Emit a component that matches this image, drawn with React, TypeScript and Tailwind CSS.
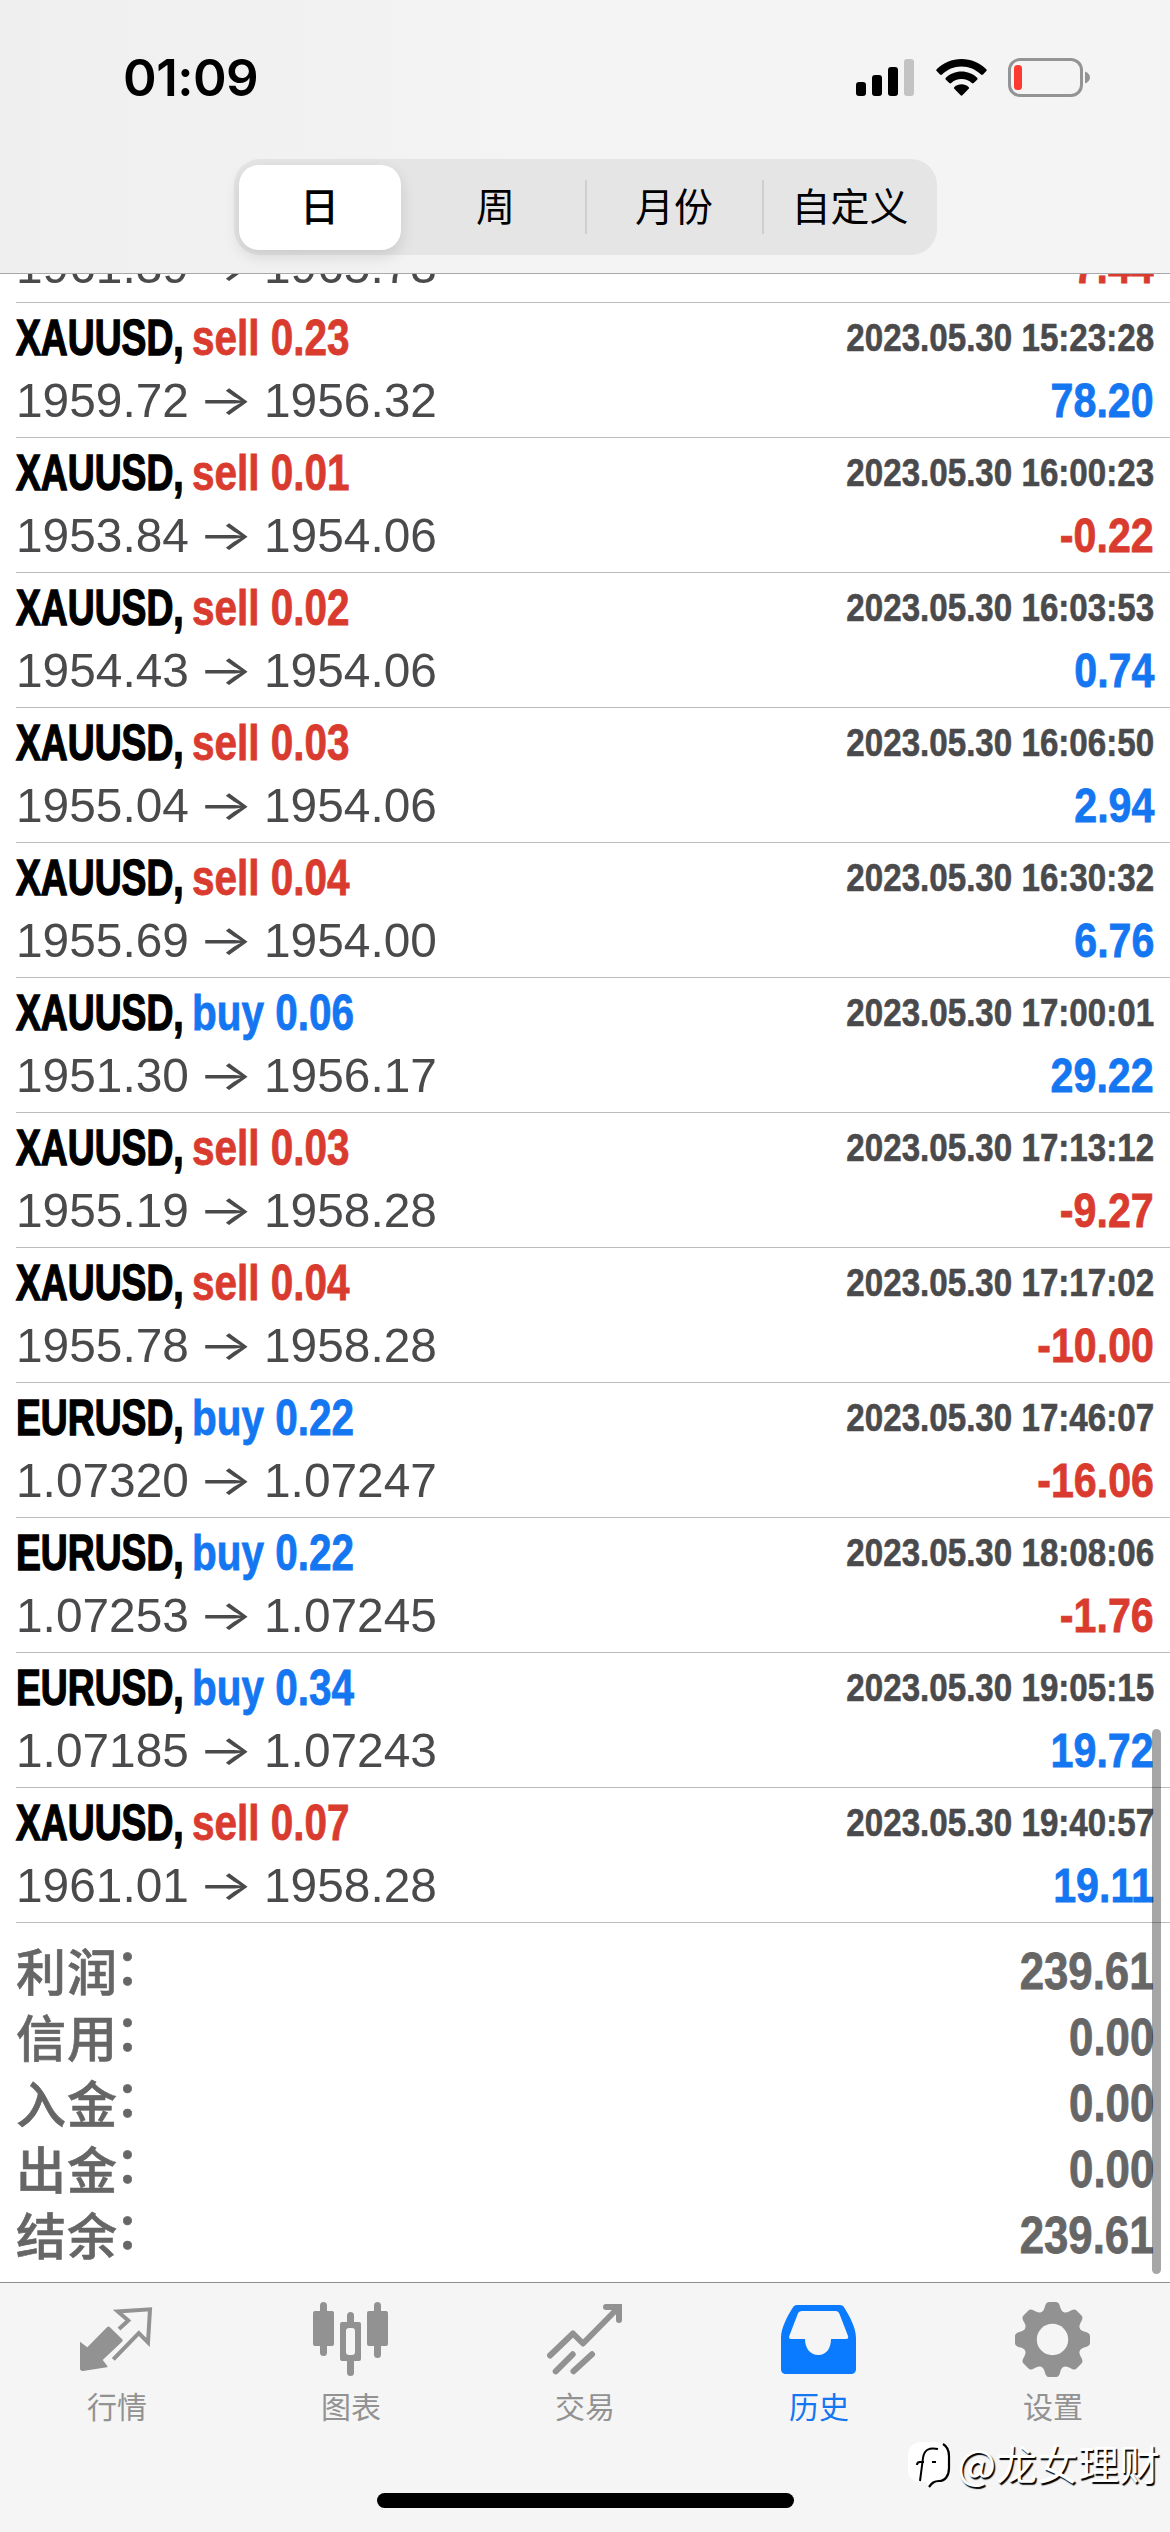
import React from 'react';

interface Deal {
    symbol: string;
    side: 'buy' | 'sell';
    volume: string;
    open: string;
    close: string;
    time: string;
    profit: string;
}

const deals: Deal[] = [
    { symbol: 'XAUUSD', side: 'sell', volume: '0.23', open: '1959.72', close: '1956.32', time: '2023.05.30 15:23:28', profit: '78.20' },
    { symbol: 'XAUUSD', side: 'sell', volume: '0.01', open: '1953.84', close: '1954.06', time: '2023.05.30 16:00:23', profit: '-0.22' },
    { symbol: 'XAUUSD', side: 'sell', volume: '0.02', open: '1954.43', close: '1954.06', time: '2023.05.30 16:03:53', profit: '0.74' },
    { symbol: 'XAUUSD', side: 'sell', volume: '0.03', open: '1955.04', close: '1954.06', time: '2023.05.30 16:06:50', profit: '2.94' },
    { symbol: 'XAUUSD', side: 'sell', volume: '0.04', open: '1955.69', close: '1954.00', time: '2023.05.30 16:30:32', profit: '6.76' },
    { symbol: 'XAUUSD', side: 'buy', volume: '0.06', open: '1951.30', close: '1956.17', time: '2023.05.30 17:00:01', profit: '29.22' },
    { symbol: 'XAUUSD', side: 'sell', volume: '0.03', open: '1955.19', close: '1958.28', time: '2023.05.30 17:13:12', profit: '-9.27' },
    { symbol: 'XAUUSD', side: 'sell', volume: '0.04', open: '1955.78', close: '1958.28', time: '2023.05.30 17:17:02', profit: '-10.00' },
    { symbol: 'EURUSD', side: 'buy', volume: '0.22', open: '1.07320', close: '1.07247', time: '2023.05.30 17:46:07', profit: '-16.06' },
    { symbol: 'EURUSD', side: 'buy', volume: '0.22', open: '1.07253', close: '1.07245', time: '2023.05.30 18:08:06', profit: '-1.76' },
    { symbol: 'EURUSD', side: 'buy', volume: '0.34', open: '1.07185', close: '1.07243', time: '2023.05.30 19:05:15', profit: '19.72' },
    { symbol: 'XAUUSD', side: 'sell', volume: '0.07', open: '1961.01', close: '1958.28', time: '2023.05.30 19:40:57', profit: '19.11' },
];

const totals = [
    { label: '利润', value: '239.61' },
    { label: '信用', value: '0.00' },
    { label: '入金', value: '0.00' },
    { label: '出金', value: '0.00' },
    { label: '结余', value: '239.61' },
];

const StatusBar: React.FC = () => (
    <div className="flex h-[159px] items-start justify-between pl-[123px] pr-[79px] pt-[46px]">
        <span className="font-['Inter'] text-[51px] leading-[64px] font-semibold tracking-[-0.5px] text-black">01:09</span>
        <div className="flex pt-3">
            <svg width="58" height="39" viewBox="0 0 58 39">
                <rect x="0" y="24" width="10" height="14" rx="3" />
                <rect x="16" y="17" width="10" height="21" rx="3" />
                <rect x="32" y="9" width="10" height="29" rx="3" />
                <rect x="48" y="1" width="10" height="37" rx="3" fill="#c3c3c4" />
            </svg>
            <svg className="ml-[22px]" width="51" height="39" viewBox="0 0 51 39">
                <path d="M25.500 1C35 1 44 4.800 50.300 11.200c.6.600.6 1.300 0 1.900l-3.300 3.400c-.6.600-1.400.6-2 0C39.800 11.300 32.900 8.400 25.500 8.400S11.200 11.300 6 16.500c-.6.600-1.400.6-2 0L.7 13.100c-.6-.6-.6-1.300 0-1.900C7 4.800 16 1 25.500 1z" />
                <path d="M25.500 13.600c6 0 11.500 2.300 15.600 6.200.6.600.6 1.300 0 1.900l-3.400 3.400c-.6.600-1.300.6-1.900 0-2.800-2.600-6.400-4-10.300-4s-7.500 1.400-10.300 4c-.6.600-1.300.6-1.900 0l-3.400-3.400c-.6-.6-.6-1.300 0-1.900 4.100-3.900 9.600-6.200 15.600-6.200z" />
                <path d="M25.500 26.200c2.700 0 5.200 1 7.100 2.700.6.600.6 1.300.1 1.900l-6.300 6.500c-.5.500-1.300.5-1.800 0l-6.300-6.500c-.5-.6-.5-1.300.1-1.900 1.900-1.700 4.400-2.700 7.100-2.700z" />
            </svg>
            <svg className="ml-[21px]" width="83" height="39" viewBox="0 0 83 39">
                <rect x="1.500" y="1.500" width="72" height="36" rx="10.500" fill="none" stroke="#939495" strokeWidth="3" />
                <path d="M77 13.500c3 1.100 5 3.300 5 6s-2 4.900-5 6z" fill="#939495" />
                <rect x="6" y="7" width="8" height="25" rx="3.500" fill="#fb3b30" />
            </svg>
        </div>
    </div>
);

const RangePicker: React.FC = () => (
    <div className="mx-auto flex h-24 w-[703px] items-center rounded-[26px] bg-[#e5e5e6] font-['Noto_Sans_CJK_SC'] text-[39px] leading-none text-black">
        <div className="ml-[5px] flex h-[85px] w-[162px] items-center justify-center rounded-[20px] bg-white pb-[5px] font-medium shadow-[0_6px_16px_rgba(0,0,0,0.12)]">日</div>
        <div className="flex h-full w-[184px] items-center justify-center pb-[5px] pl-[6px]">周</div>
        <div className="h-[54px] w-[2px] bg-[#cfcfd1]" />
        <div className="flex h-full w-[175px] items-center justify-center pb-[5px]">月份</div>
        <div className="h-[54px] w-[2px] bg-[#cfcfd1]" />
        <div className="flex h-full flex-1 items-center justify-center pb-[5px]">自定义</div>
    </div>
);

const Prices: React.FC<{ open: string; close: string }> = ({ open, close }) => (
    <div className="flex h-[54px] items-center text-[49px] leading-[54px] whitespace-nowrap text-[#4a4a4c]">
        <span className="w-[182px] origin-left scale-x-[0.976]">{open}</span>
        <span className="w-[66px] origin-left scale-x-[1.38] font-['Inter'] text-[42px]">→</span>
        <span className="origin-left scale-x-[0.976]">{close}</span>
    </div>
);

const Profit: React.FC<{ value: string }> = ({ value }) => (
    <span className={`origin-right scale-x-[0.84] text-[49px] leading-[54px] font-bold [-webkit-text-stroke:0.8px] ${value.startsWith('-') ? 'text-[#da3b2f]' : 'text-[#1476f1]'}`}>{value}</span>
);

const DealRow: React.FC<{ deal: Deal }> = ({ deal }) => (
    <div className="ml-4 h-[135px] border-b border-[#bcbcbe] pr-4 pt-[4px]">
        <div className="flex h-[62px] items-center justify-between whitespace-nowrap">
            <div className="flex text-[50px] leading-[56px] font-bold">
                <span className="w-[176px] origin-left scale-x-[0.745] text-black [-webkit-text-stroke:1.4px]">{deal.symbol},</span>
                <span className={`origin-left scale-x-[0.81] [-webkit-text-stroke:0.8px] ${deal.side === 'buy' ? 'text-[#1476f1]' : 'text-[#da3b2f]'}`}>
                    {deal.side} {deal.volume}
                </span>
            </div>
            <span className="origin-right scale-x-[0.85] text-[39px] leading-[54px] font-bold text-[#4a4a4c] [-webkit-text-stroke:0.6px]">{deal.time}</span>
        </div>
        <div className="flex items-center justify-between pt-1">
            <Prices open={deal.open} close={deal.close} />
            <Profit value={deal.profit} />
        </div>
    </div>
);

const Totals: React.FC = () => (
    <div className="ml-4 flex h-[359px] flex-col pr-4 pt-[15px] text-[#666667]">
        {totals.map((row) => (
            <div key={row.label} className="flex h-[66px] items-center justify-between">
                <span className="flex pb-[5px] font-['Noto_Sans_CJK_SC'] text-[50px] leading-[60px] font-medium tracking-[1px] [-webkit-text-stroke:0.6px]">
                    {row.label}
                    <span className="-mt-[6px] -ml-[3px]">：</span>
                </span>
                <span className="origin-right scale-x-[0.85] text-[51.5px] leading-[60px] font-bold [-webkit-text-stroke:0.8px]">{row.value}</span>
            </div>
        ))}
    </div>
);

const QuotesIcon = () => (
    <svg width="76" height="76" viewBox="0 0 76 76">
        <path d="M1 39.700l7.300 5.600L28 25.200c1-1 1.900-1 2.900 0L43 37c.9.900.9 1.800 0 2.700L23.700 58l4.600 6c.4.600.2 1.200-.5 1.300L4 69c-2 .2-3-.8-3-2.500z" fill="#929292" />
        <path d="M40 27l9.300-8.500-10.500-9L71 7.300l-2 33-9.200-9.300-25.500 26.300" fill="none" stroke="#929292" strokeWidth="4" />
    </svg>
);

const ChartIcon = () => (
    <svg width="76" height="76" viewBox="0 0 76 76" fill="#929292">
        <rect x="7" y="0" width="7" height="54" rx="3.500" />
        <rect x="0" y="9" width="21" height="35" rx="2" />
        <rect x="34" y="10" width="7" height="15" rx="3.500" />
        <rect x="34" y="55" width="7" height="19" rx="3.500" />
        <path fillRule="evenodd" d="M29 20h17a2 2 0 0 1 2 2v35a2 2 0 0 1-2 2H29a2 2 0 0 1-2-2V22a2 2 0 0 1 2-2zm7 6a3 3 0 0 0-3 3v21a3 3 0 0 0 3 3h3a3 3 0 0 0 3-3V29a3 3 0 0 0-3-3z" />
        <rect x="61" y="0" width="7" height="56" rx="3.500" />
        <rect x="54" y="9" width="21" height="35" rx="2" />
    </svg>
);

const TradeIcon = () => (
    <svg width="76" height="76" viewBox="0 0 76 76" fill="none" stroke="#929292" strokeWidth="6" strokeLinecap="round">
        <path d="M3 53.500L26 31.500l10 10L71 6" strokeLinejoin="round" />
        <path d="M59 5h13v13" />
        <path d="M8.700 69.300l17-17M26.500 69.300l18.500-17" />
    </svg>
);

const HistoryIcon = () => (
    <svg width="76" height="76" viewBox="0 0 76 76">
        <path fill="#0a7aff" fillRule="evenodd" d="M16 3h43c2 0 3.500 1 4.500 3C69 15 75 26 75 36v31c0 3-2 5-5 5H5c-3 0-5-2-5-5V36C0 26 6 15 11.500 6c1-2 2.500-3 4.500-3zm5 6c-2 0-3.500 1-4.200 2.800L8.300 34c-.6 1.700 0 3 2 3H24c0 9 5 16 13.300 16S50 46 50 37h15c2 0 2.600-1.300 2-3l-8.500-22C57.800 10 56.500 9 54.500 9z" />
    </svg>
);

const SettingsIcon = () => (
    <svg width="76" height="76" viewBox="0 0 76 76">
        <g fill="#929292">
            {[0, 45, 90, 135, 180, 225, 270, 315].map((angle) => (
                <path key={angle} transform={`rotate(${angle} 37.500 37.500)`} d="M23 12c4-1.500 5.500-3 6.500-6 1-4 2-6 4.500-6h7c2.500 0 3.500 2 4.500 6 1 3 2.500 4.500 6.500 6z" />
            ))}
            <circle cx="37.500" cy="37.500" r="29" />
        </g>
        <circle cx="37.500" cy="37.500" r="15.700" fill="#f5f5f5" />
    </svg>
);

const tabs = [
    { label: '行情', icon: <QuotesIcon /> },
    { label: '图表', icon: <ChartIcon /> },
    { label: '交易', icon: <TradeIcon /> },
    { label: '历史', icon: <HistoryIcon />, active: true },
    { label: '设置', icon: <SettingsIcon /> },
];

const TabBar: React.FC = () => (
    <nav className="flex h-[250px] flex-col items-center justify-between border-t border-[#8f8f91] bg-[#f5f5f5] pb-[24px]">
        <div className="grid w-full grid-cols-5 pt-[19px]">
            {tabs.map((tab) => (
                <div key={tab.label} className="flex flex-col items-center">
                    {tab.icon}
                    <span className={`mt-[5px] font-['Noto_Sans_CJK_SC'] text-[30px] leading-[44px] ${tab.active ? 'text-[#1476f1]' : 'text-[#929292]'}`}>{tab.label}</span>
                </div>
            ))}
        </div>
        <div className="h-[15px] w-[417px] rounded-full bg-black" />
    </nav>
);

const Watermark: React.FC = () => (
    <div className="absolute right-[10px] bottom-[40px] flex items-center font-['Noto_Sans_CJK_SC'] text-[41px] leading-[60px] text-white [text-shadow:1.500px_1.500px_1px_#000]">
        <svg className="mt-[6px] mr-[4px]" width="46" height="50" viewBox="0 0 46 50">
            <path d="M15 2h13c9 0 14 5 14 14v12c0 8-4 13-11 13-4 1-6 3-9 6l-3-5h-5C6 42 1 38 1 30V16C1 7 6 2 15 2z" fill="#fff" />
            <path d="M36 4c5 3 6 7 6 12v12c0 8-4 13-10 13-5 0-7 2-10 6" fill="none" stroke="#000" strokeWidth="2.200" />
            <path d="M31 9c-9-2-14 1-15 9l-3 23M10 25c0-2 1-3 3-3h4M25 22h4" fill="none" stroke="#000" strokeWidth="2" />
        </svg>
        <span>@龙女理财</span>
    </div>
);

export default function App() {
    return (
        <div className="relative flex h-[2532px] w-[1170px] flex-col overflow-hidden bg-white font-['Liberation_Sans','Noto_Sans_CJK_SC',sans-serif]">
            <header className="h-[274px] shrink-0 border-b border-[#a9a9ab] bg-linear-to-r from-[#efefef] via-[#f4f4f5] to-[#f4f4f5]">
                <StatusBar />
                <RangePicker />
            </header>
            <main className="h-[2008px] overflow-hidden">
                <div className="ml-4 flex h-[29px] items-end justify-between overflow-hidden border-b border-[#bcbcbe] pr-4 pb-[9px]">
                    <Prices open="1961.39" close="1965.73" />
                    <Profit value="-7.44" />
                </div>
                {deals.map((deal) => (
                    <DealRow key={deal.time} deal={deal} />
                ))}
                <Totals />
            </main>
            <TabBar />
            <div className="absolute top-[1729px] right-[9px] h-[545px] w-[9px] rounded-full bg-black/35" />
            <Watermark />
        </div>
    );
}
